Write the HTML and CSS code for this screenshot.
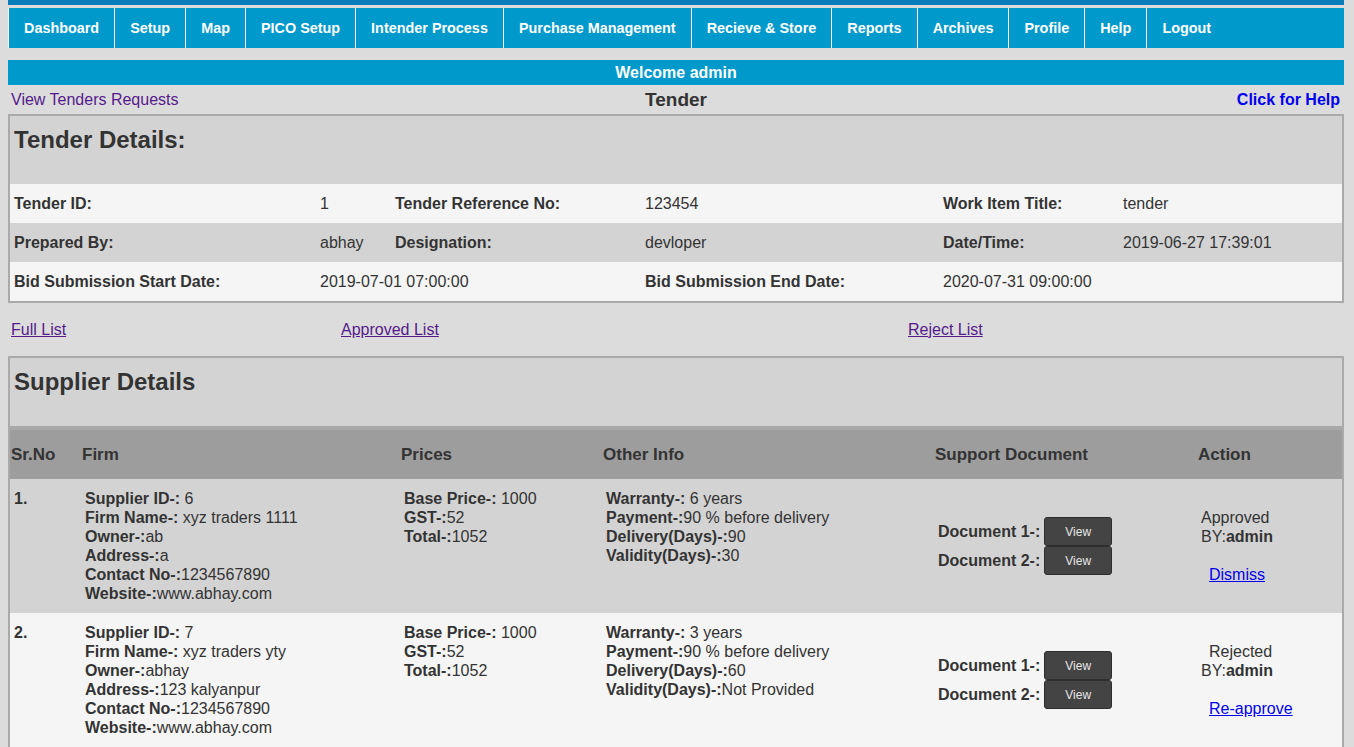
FILE: index.html
```html
<!DOCTYPE html>
<html>
<head>
<meta charset="utf-8">
<title>Tender</title>
<link rel="stylesheet" href="styles.css">
</head>
<body>
<div class="topstrip"></div>
<nav class="nav">
  <a class="nav-item" href="#">Dashboard</a>
  <a class="nav-item" href="#">Setup</a>
  <a class="nav-item" href="#">Map</a>
  <a class="nav-item" href="#">PICO Setup</a>
  <a class="nav-item" href="#">Intender Process</a>
  <a class="nav-item" href="#">Purchase Management</a>
  <a class="nav-item" href="#">Recieve &amp; Store</a>
  <a class="nav-item" href="#">Reports</a>
  <a class="nav-item" href="#">Archives</a>
  <a class="nav-item" href="#">Profile</a>
  <a class="nav-item" href="#">Help</a>
  <a class="nav-item" href="#">Logout</a>
</nav>
<div class="welcome">Welcome admin</div>
<div class="titlebar">
  <a class="vlink" href="#">View Tenders Requests</a>
  <span class="pagetitle">Tender</span>
  <a class="helplink" href="#">Click for Help</a>
</div>

<section class="box">
  <h2 class="box-title">Tender Details:</h2>
  <div class="trow light">
    <div class="lbl">Tender ID:</div>
    <div class="val">1</div>
    <div class="lbl">Tender Reference No:</div>
    <div class="val">123454</div>
    <div class="lbl">Work Item Title:</div>
    <div class="val">tender</div>
  </div>
  <div class="trow dark">
    <div class="lbl">Prepared By:</div>
    <div class="val">abhay</div>
    <div class="lbl">Designation:</div>
    <div class="val">devloper</div>
    <div class="lbl">Date/Time:</div>
    <div class="val">2019-06-27 17:39:01</div>
  </div>
  <div class="trow light">
    <div class="lbl">Bid Submission Start Date:</div>
    <div class="val span2">2019-07-01 07:00:00</div>
    <div class="lbl">Bid Submission End Date:</div>
    <div class="val">2020-07-31 09:00:00</div>
    <div class="val"></div>
  </div>
</section>

<div class="listlinks">
  <a class="vlink u" href="#">Full List</a>
  <a class="vlink u" href="#">Approved List</a>
  <a class="vlink u" href="#">Reject List</a>
</div>

<section class="box">
  <h2 class="box-title sup">Supplier Details</h2>
  <div class="srow head">
    <div class="th">Sr.No</div>
    <div class="th">Firm</div>
    <div class="th">Prices</div>
    <div class="th">Other Info</div>
    <div class="th">Support Document</div>
    <div class="th">Action</div>
  </div>
  <div class="srow dark">
    <div class="td top"><b>1.</b></div>
    <div class="td top">
      <b>Supplier ID-:</b> 6<br>
      <b>Firm Name-:</b> xyz traders 1111<br>
      <b>Owner-:</b>ab<br>
      <b>Address-:</b>a<br>
      <b>Contact No-:</b>1234567890<br>
      <b>Website-:</b>www.abhay.com
    </div>
    <div class="td top">
      <b>Base Price-:</b> 1000<br>
      <b>GST-:</b>52<br>
      <b>Total-:</b>1052
    </div>
    <div class="td top">
      <b>Warranty-:</b> 6 years<br>
      <b>Payment-:</b>90 % before delivery<br>
      <b>Delivery(Days)-:</b>90<br>
      <b>Validity(Days)-:</b>30
    </div>
    <div class="td mid">
      <div class="docline"><b>Document 1-:</b> <button class="viewbtn">View</button></div>
      <div class="docline"><b>Document 2-:</b> <button class="viewbtn">View</button></div>
    </div>
    <div class="td mid">
      <div class="status">Approved<br>BY:<b>admin</b></div>
      <div class="blank"></div>
      <a class="actlink" href="#">Dismiss</a>
    </div>
  </div>
  <div class="srow light">
    <div class="td top"><b>2.</b></div>
    <div class="td top">
      <b>Supplier ID-:</b> 7<br>
      <b>Firm Name-:</b> xyz traders yty<br>
      <b>Owner-:</b>abhay<br>
      <b>Address-:</b>123 kalyanpur<br>
      <b>Contact No-:</b>1234567890<br>
      <b>Website-:</b>www.abhay.com
    </div>
    <div class="td top">
      <b>Base Price-:</b> 1000<br>
      <b>GST-:</b>52<br>
      <b>Total-:</b>1052
    </div>
    <div class="td top">
      <b>Warranty-:</b> 3 years<br>
      <b>Payment-:</b>90 % before delivery<br>
      <b>Delivery(Days)-:</b>60<br>
      <b>Validity(Days)-:</b>Not Provided
    </div>
    <div class="td mid">
      <div class="docline"><b>Document 1-:</b> <button class="viewbtn">View</button></div>
      <div class="docline"><b>Document 2-:</b> <button class="viewbtn">View</button></div>
    </div>
    <div class="td mid">
      <div class="status"><span class="indent">Rejected</span><br>BY:<b>admin</b></div>
      <div class="blank"></div>
      <a class="actlink" href="#">Re-approve</a>
    </div>
  </div>
</section>
</body>
</html>
```

FILE: styles.css
```css
* { box-sizing: border-box; }

html, body {
  background: #dcdcdc;
}

body {
  margin: 0 8px;
  width: 1336px;
  font-family: "Liberation Sans", Arial, sans-serif;
  font-size: 16px;
  color: #333;
}

.topstrip {
  height: 5px;
  background: #087cb9;
  margin-bottom: 3px;
}

.nav {
  display: flex;
  height: 40px;
  background: #0099cc;
}

.nav-item {
  display: flex;
  align-items: center;
  padding: 0 15px;
  border-left: 1px solid #ffffff;
  color: #ffffff;
  font-weight: bold;
  font-size: 14.4px;
  text-decoration: none;
}

.welcome {
  margin-top: 12px;
  height: 25px;
  background: #0099cc;
  color: #ffffff;
  font-weight: bold;
  font-size: 16px;
  display: flex;
  align-items: center;
  justify-content: center;
}

.titlebar {
  height: 29px;
  display: grid;
  grid-template-columns: 1fr auto 1fr;
  align-items: center;
}

.vlink {
  color: #551a8b;
  text-decoration: none;
  padding-left: 3px;
}

.vlink.u { text-decoration: underline; }

.pagetitle {
  font-weight: bold;
  font-size: 19px;
  color: #333;
}

.helplink {
  justify-self: end;
  padding-right: 4px;
  color: #0000ee;
  font-weight: bold;
  text-decoration: none;
}

.box {
  border: 2px solid #aaaaaa;
  background: #d3d3d3;
}

.box-title {
  margin: 0;
  height: 68px;
  padding: 10px 0 0 4px;
  font-size: 24px;
  line-height: 28px;
  font-weight: bold;
  color: #333;
  background: #d3d3d3;
}

.box-title.sup {
  height: 72px;
  border-bottom: 4px solid #a9a9a9;
}

.trow {
  display: grid;
  grid-template-columns: 306px 75px 250px 298px 180px 1fr;
  height: 39px;
  align-items: center;
}

.light { background: #f5f5f5; }
.dark { background: #d3d3d3; }

.lbl {
  font-weight: bold;
  padding-left: 4px;
}

.val {
  padding-left: 4px;
}

.span2 { grid-column: span 2; }

.listlinks {
  height: 53px;
  display: grid;
  grid-template-columns: 330px 567px 1fr;
  align-items: center;
}

.srow {
  display: grid;
  grid-template-columns: 71px 319px 202px 332px 263px 1fr;
}

.srow.head {
  background: #9d9d9d;
  height: 49px;
  align-items: center;
}

.th {
  font-weight: bold;
  font-size: 17px;
  padding-left: 1px;
}

.td {
  padding: 10px 0 10px 4px;
  line-height: 19px;
}

.td.top { align-self: start; }

.td.mid {
  align-self: center;
  padding: 0 0 0 4px;
}

.docline {
  display: flex;
  align-items: center;
  gap: 4px;
  height: 29px;
}

.viewbtn {
  width: 68px;
  height: 29px;
  background: #444444;
  color: #e6e6e6;
  border: 1px solid #2e2e2e;
  border-radius: 3px;
  font-family: "Liberation Sans", Arial, sans-serif;
  font-size: 12px;
  padding: 0;
}

.status {
  line-height: 19px;
}

.indent { padding-left: 8px; }

.blank { height: 19px; }

.actlink {
  display: inline-block;
  margin-left: 8px;
  color: #0000ee;
  text-decoration: underline;
  line-height: 19px;
}
```
